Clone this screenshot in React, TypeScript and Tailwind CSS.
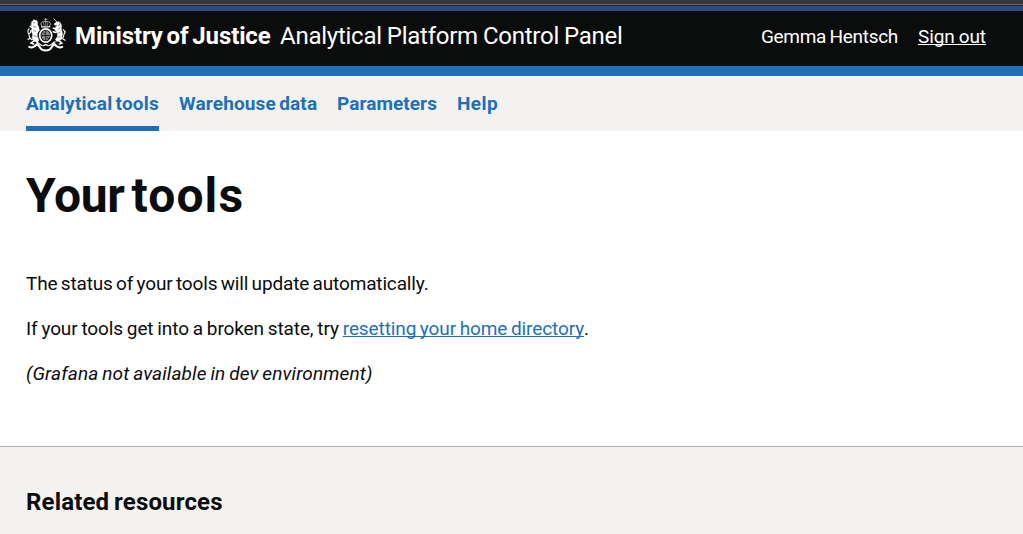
function RoyalArms({ className }: { className: string }) {
  return (
    <svg
      className={className}
      viewBox="0 0 39 34"
      fill="none"
      stroke="#fff"
      strokeLinecap="round"
      strokeLinejoin="round"
      aria-hidden="true"
    >
      {/* crown */}
      <path d="M18.7 .4v2.600M17.4 1.300h2.6" strokeWidth=".7" opacity=".8" />
      <path d="M14.800 8c-2.400-3 .3-4.900 3.900-4.300 3.600-.6 6.300 1.300 3.900 4.300" strokeWidth=".8" opacity=".85" />
      <path d="M18.700 3.500v4M16.600 4.800l.5 2.600M20.800 4.800l-.5 2.600" strokeWidth=".6" opacity=".8" />
      <path d="M14.600 8.800h8.200" strokeWidth="1.300" />
      {/* garter and shield */}
      <ellipse cx="18.700" cy="17.500" rx="6" ry="6.700" strokeWidth="1.700" />
      <ellipse cx="18.700" cy="17.500" rx="4.200" ry="4.900" fill="#8a8c8b" stroke="none" />
      <path d="M18.700 13v9M15 17.500h7.400M16.400 14.600l1 1.100M20.400 19.300l1 1.400" stroke="#0b0c0c" strokeWidth=".8" />
      {/* lion */}
      <path d="M4.800 3.600l1.300-.6.600-1.400 1.500.7 1.600.3.900 1.900-.3 2 1.400 2.400.3 2.700-1.700 3.300-.1 3.600 1.700 3.400-1.300 2.200-3.300-.9-2.200-3.200.4-3.800-1.300-3.100.8-3.700-.9-2.600z" fill="#fff" strokeWidth=".4" />
      <path d="M9.500 10.500l2.400 1.700M9 15l1.800-1.400M7.500 22.500l-3.700 2.600 2.800 1M5 9.500l-1.800-1.200" strokeWidth="1.600" />
      <path d="M5.500 21.500c-3.800.3-2.700-3.500-3.800-5.500-1.400-2.200-.9-4.300.6-5.200M2.200 15.500c1.400-.4 1.700-1.600 1.400-2.900M1 21.500l1.800-1.300" strokeWidth="1.100" />
      <path d="M6.600 4.600l1.200.3M6.300 8.300l2.700 1M6.600 12.300l2 1.100M7 17.600l2.300.9" stroke="#0b0c0c" strokeWidth=".5" />
      {/* unicorn */}
      <path d="M26.800.8l3.400 3.300" strokeWidth=".8" />
      <path d="M30.300 4.200l1.200-.8 2.100 1.500 1 3.100-.2 3.500 1.100 3.600-.5 4.200-1.800 3.200-3.600 1.100-1.200-2.200 2-2.800.1-3.300-2.500-3.200.7-3.200 1.800-2.100-2.600.5-.9-1.200 2.300-2z" fill="#fff" strokeWidth=".4" />
      <path d="M29.500 10.800l-3.300-.6M29 14.500l-2.800-.8M31.500 22.500l3.600 2.600-2.700 1" strokeWidth="1.500" />
      <path d="M34 21c3.600.1 2-3.600 3.200-5.100 1.300-1.600.5-3.400-1-4.200M37.300 15.500l1-1.700M36.300 21.300l2 1" strokeWidth="1.100" />
      <path d="M32.700 5.800l-1 2.200M33.300 9.700l-2.300 1.700M33.400 14l-2 1M33 18.500l-1.800.6" stroke="#0b0c0c" strokeWidth=".5" />
      {/* motto scroll */}
      <path d="M2.300 28.900c3.200 2 5.700-.6 7.900-2.900 2.300 1.500 2.700 4.600 4.800 5.600 2.400 1.100 5 1.100 7.400 0 2.100-1 2.500-4.100 4.800-5.600 2.200 2.300 4.700 4.900 7.900 2.900" strokeWidth="2.100" />
      <path d="M9.200 23.900c2.400.4 3.600 2.700 5.500 3.500M28.200 23.900c-2.400.4-3.600 2.700-5.500 3.500M16.200 27.600l2.500-.9 2.500.9" strokeWidth="1.300" />
    </svg>
  );
}

const linkClass = "block h-[55px] pt-[14px] leading-[27px]";
const underlineClass = "underline decoration-1 underline-offset-1 [text-decoration-skip-ink:none]";

export default function App() {
  return (
    <div className="flex min-h-screen flex-col bg-white font-['Roboto',sans-serif] text-[19px] text-[#0b0c0c]">
      <div className="h-[11px] border-b-[5px] border-[#294a85] bg-[#36363b]">
        <div className="h-[6px] border-b border-[#25252a]">
          <div className="h-[5px] border-b border-[#68686c]" />
        </div>
      </div>

      <header className="flex h-[65px] border-b-[10px] border-[#1d70b8] bg-[#0b0c0c] pr-[37px] pl-[27px] text-white">
        <div className="flex pt-[7px]">
          <RoyalArms className="h-[34px] w-[39px] shrink-0" />
          <div className="ml-[9px] flex text-[24px] leading-[36px] whitespace-nowrap">
            <span className="w-[205px] font-bold tracking-[-0.12px] [word-spacing:-2px]">Ministry of Justice</span>
            <span className="tracking-[-0.25px] [word-spacing:-0.7px]">Analytical Platform Control Panel</span>
          </div>
        </div>
        <div className="ml-auto flex gap-5 pt-[13px] leading-[26px] whitespace-nowrap">
          <span className="tracking-[-0.3px] [word-spacing:-1px]">Gemma Hentsch</span>
          <a href="#" className={`${underlineClass} tracking-[-0.1px] [word-spacing:-0.5px]`}>Sign out</a>
        </div>
      </header>

      <nav className="flex h-[55px] gap-5 bg-[#f3f2f1] pl-[26px] font-bold whitespace-nowrap text-[#1d70b8]">
        <a href="#" className={`${linkClass} w-[133px] border-b-[5px] border-[#1d70b8] tracking-[0.2px] [word-spacing:-1.8px]`}>
          Analytical tools
        </a>
        <a href="#" className={`${linkClass} w-[138px] tracking-[0.15px] [word-spacing:-1.6px]`}>Warehouse data</a>
        <a href="#" className={`${linkClass} w-[100px] tracking-[0.07px]`}>Parameters</a>
        <a href="#" className={`${linkClass} tracking-[0.4px]`}>Help</a>
      </nav>

      <main className="h-[315px] px-[26px] pt-[40px]">
        <h1 className="text-[48px] leading-[50px] font-bold [word-spacing:-5px]">
          <span className="tracking-[-0.3px]">Your</span> <span className="tracking-[1.1px]">tools</span>
        </h1>
        <p className="mt-[50px] leading-[25px] tracking-[-0.15px] [word-spacing:-1.2px]">
          The status of your tools will update automatically.
        </p>
        <p className="mt-5 leading-[25px] tracking-[-0.12px] [word-spacing:-0.7px]">
          If your tools get into a broken state, try{" "}
          <a href="#" className={`${underlineClass} tracking-[-0.1px] text-[#1d70b8] [word-spacing:-1px]`}>
            resetting your home directory
          </a>
          .
        </p>
        <p className="mt-5 leading-[25px] tracking-[0.13px] italic [word-spacing:-1px]">
          (Grafana not available in dev environment)
        </p>
      </main>

      <footer className="flex-1 border-t border-[#b1b4b6] bg-[#f3f2f1] px-[26px] pt-[40px]">
        <h2 className="text-[24px] leading-[30px] font-bold tracking-[0.15px] [word-spacing:-1.2px]">Related resources</h2>
      </footer>
    </div>
  );
}
